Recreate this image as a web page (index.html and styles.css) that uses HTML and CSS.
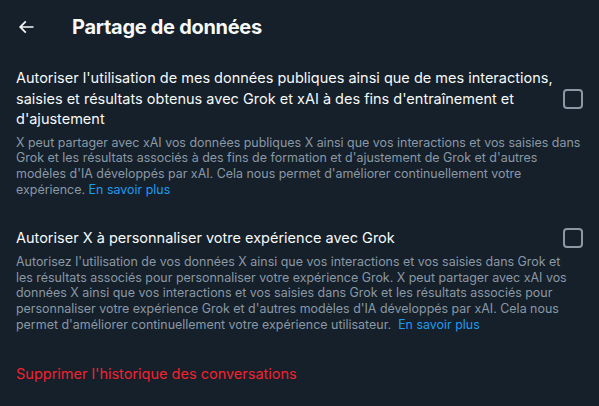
FILE: index.html
```html
<!DOCTYPE html>
<html lang="fr">
<head>
    <meta charset="UTF-8">
    <meta name="viewport" content="width=device-width, initial-scale=1.0">
    <title>Partage de données</title>
    <link rel="stylesheet" href="styles.css">
</head>
<body>
    <header class="top-bar">
        <button type="button" class="back-button" aria-label="Retour">
            <svg viewBox="0 0 24 24" width="20" height="20">
                <path d="M7.414 13l5.043 5.04-1.414 1.42L3.586 12l7.457-7.46 1.414 1.42L7.414 11H21v2H7.414z"></path>
            </svg>
        </button>
        <h1>Partage de données</h1>
    </header>

    <section class="setting">
        <label class="setting-row" for="share-public">
            <span class="setting-title">Autoriser l'utilisation de mes données publiques ainsi que de mes interactions, saisies et résultats obtenus avec Grok et xAI à des fins d'entraînement et d'ajustement</span>
            <input type="checkbox" id="share-public" class="check">
        </label>
        <p class="setting-desc">X peut partager avec xAI vos données publiques X ainsi que vos interactions et vos saisies dans Grok et les résultats associés à des fins de formation et d'ajustement de Grok et d'autres modèles d'IA développés par xAI. Cela nous permet d'améliorer continuellement votre expérience. <a href="#">En savoir plus</a></p>
    </section>

    <section class="setting">
        <label class="setting-row" for="personalize">
            <span class="setting-title">Autoriser X à personnaliser votre expérience avec Grok</span>
            <input type="checkbox" id="personalize" class="check">
        </label>
        <p class="setting-desc">Autorisez l'utilisation de vos données X ainsi que vos interactions et vos saisies dans Grok et<br>les résultats associés pour personnaliser votre expérience Grok. X peut partager avec xAI vos données X ainsi que vos interactions et vos saisies dans Grok et les résultats associés pour personnaliser votre expérience Grok et d'autres modèles d'IA développés par xAI. Cela nous permet d'améliorer continuellement votre expérience utilisateur. &nbsp;<a href="#">En savoir plus</a></p>
    </section>

    <section class="setting">
        <button type="button" class="danger-link">Supprimer l'historique des conversations</button>
    </section>
</body>
</html>
```

FILE: styles.css
```css
body {
    font-family: Inter, Roboto, sans-serif;
    background-color: #15202b;
    color: #f7f9f9;
    margin: 0;
    padding: 0;
}

.top-bar {
    height: 53px;
    display: flex;
    align-items: center;
    padding: 0 16px;
}

.back-button {
    width: 56px;
    padding: 0;
    border: none;
    background: none;
    display: flex;
    align-items: center;
    cursor: pointer;
}

.back-button svg {
    fill: #f7f9f9;
}

h1 {
    font-size: 20px;
    font-weight: 700;
    letter-spacing: -0.3px;
    margin: 0;
}

.setting {
    padding: 15px 16px;
}

.setting-row {
    display: flex;
    align-items: center;
    gap: 4px;
    cursor: pointer;
}

.setting-title {
    flex: 1;
    font-size: 14.5px;
    line-height: 20.5px;
}

.check {
    appearance: none;
    width: 20px;
    height: 20px;
    margin: 0;
    border: 2px solid #8b98a5;
    border-radius: 4px;
    flex-shrink: 0;
}

.setting-desc {
    margin: 5px 0 0;
    font-size: 12.45px;
    line-height: 15.9px;
    color: #8b98a5;
}

.setting-desc a {
    color: #1d9bf0;
    text-decoration: none;
}

.danger-link {
    padding: 0;
    border: none;
    background: none;
    font-family: inherit;
    font-size: 14.5px;
    line-height: 20.5px;
    color: #f4212e;
    cursor: pointer;
}
```
